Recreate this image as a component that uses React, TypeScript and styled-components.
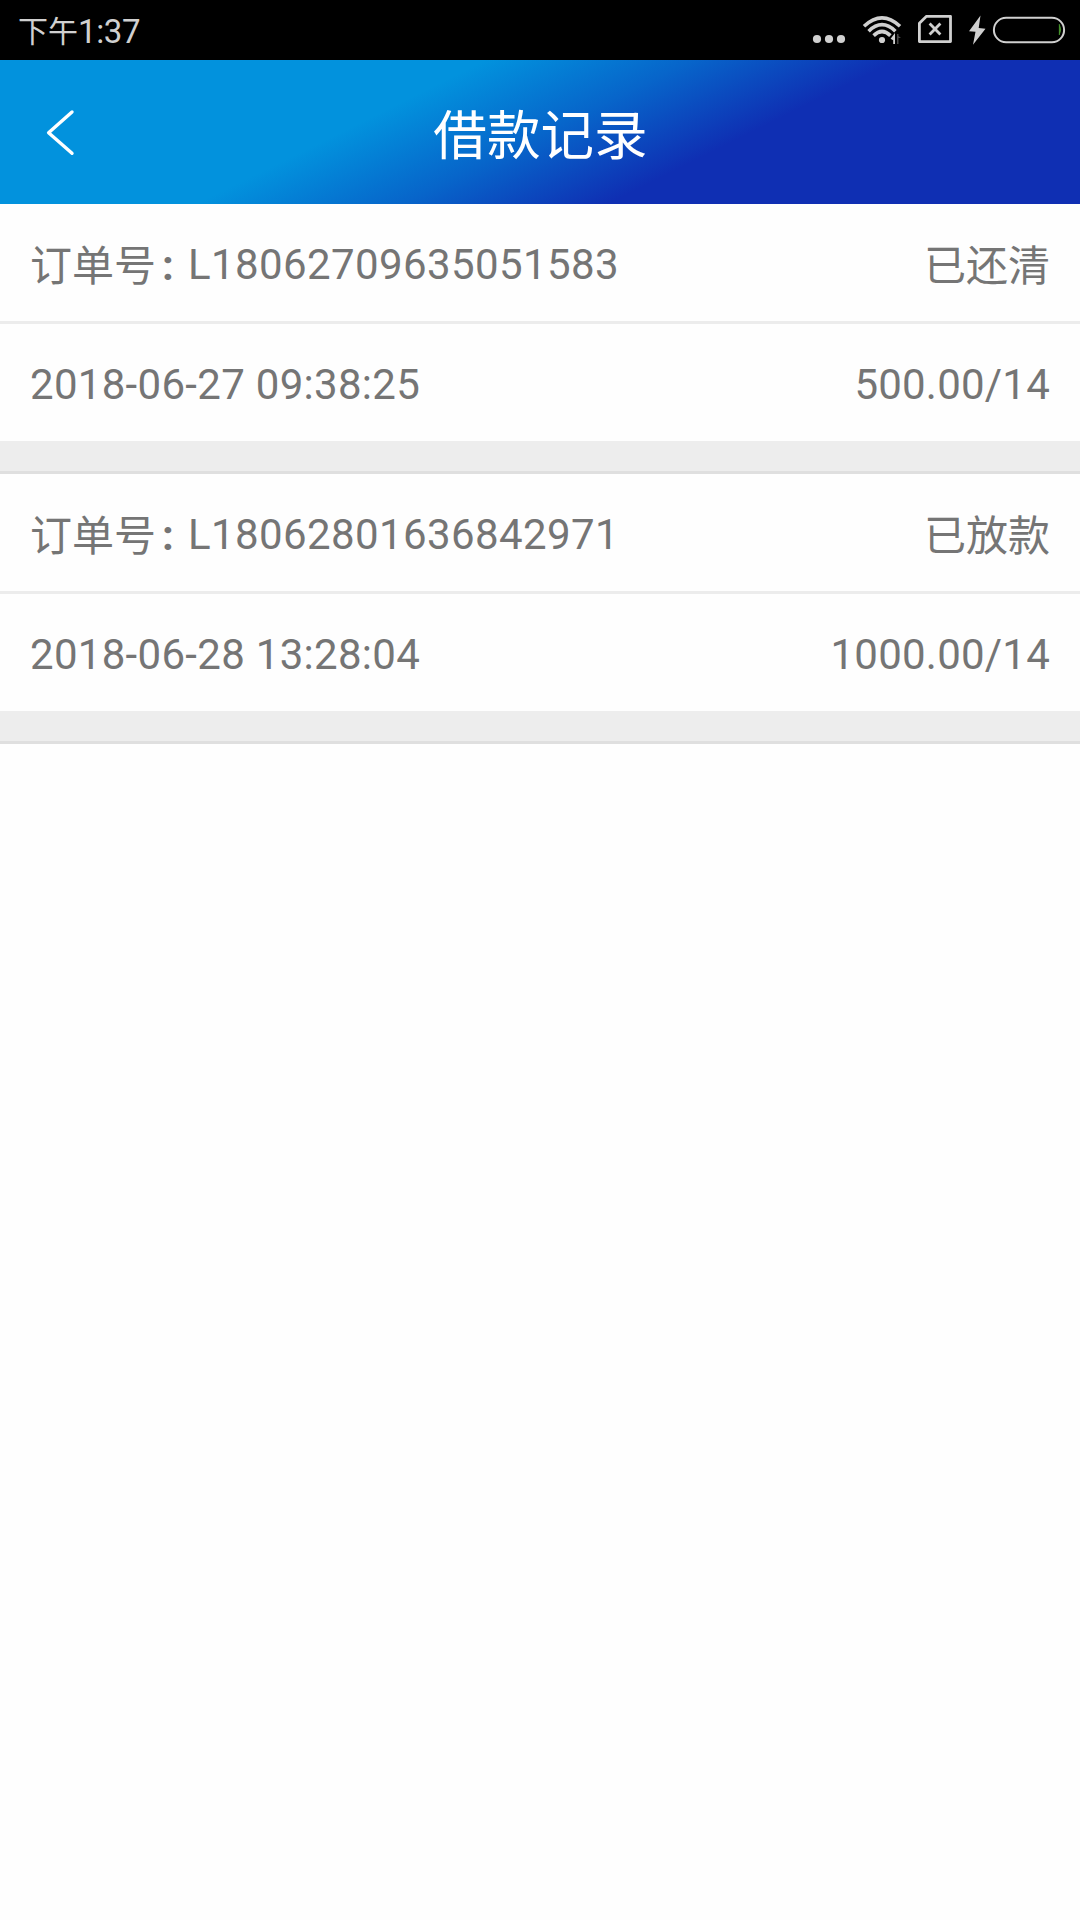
import React from "react";
import styled, { createGlobalStyle } from "styled-components";

const GlobalStyle = createGlobalStyle`
  body {
    margin: 0;
    background: #fff;
    font-family: Roboto, "Noto Sans CJK SC", sans-serif;
  }
`;

const Screen = styled.main`
  display: flex;
  flex-direction: column;
  width: 1080px;
  min-height: 1920px;
  background: #fefefe;
`;

const StatusBar = styled.div`
  display: flex;
  align-items: center;
  justify-content: space-between;
  height: 60px;
  padding: 0 14px 0 18px;
  background: #000;
  color: #d0d0d0;
`;

const Clock = styled.span`
  display: flex;
  align-items: center;
  font-size: 30px;
  line-height: 60px;
  padding-top: 3px;
`;

const ClockDigits = styled.span`
  font-size: 33px;
  letter-spacing: -0.4px;
`;

const StatusIcons = styled.div`
  display: flex;
  height: 60px;
`;

const Glyph = styled.svg<{ $gap?: number }>`
  display: block;
  height: 60px;
  margin-left: ${({ $gap = 0 }) => $gap}px;
`;

const Header = styled.header`
  display: grid;
  grid-template-columns: 120px 1fr 120px;
  align-items: center;
  height: 144px;
  background: linear-gradient(153.6deg, #0292dd 35.5%, #0765ca 50.5%, #0f2fb3 65.5%);
`;

const BackButton = styled.button`
  display: flex;
  align-items: center;
  height: 144px;
  padding: 0 0 0 44px;
  border: 0;
  background: none;
`;

const Title = styled.h1`
  margin: 0;
  padding: 10px 0 0 1px;
  color: #fff;
  font-size: 53.6px;
  font-weight: 400;
  line-height: 80px;
  text-align: center;
`;

const Record = styled.section`
  display: flex;
  flex-direction: column;
  border-bottom: 3px solid #dfdfdf;
`;

const Row = styled.div<{ $divided?: boolean }>`
  display: flex;
  align-items: center;
  justify-content: space-between;
  height: 117px;
  padding: 4px 30px 0;
  box-sizing: border-box;
  color: #757575;
  font-size: 42px;
  line-height: 60px;

  ${({ $divided }) => $divided && "height: 120px; border-bottom: 3px solid #ececec;"}
`;

const Label = styled.span`
  display: flex;
  align-items: center;
`;

const Chinese = styled.span`
  padding-top: 4px;
`;

const Colon = styled.span`
  width: 32px;
  padding-top: 2px;
  text-indent: 6px;
  font-weight: 700;
`;

const Latin = styled.span<{ $tracking: number }>`
  letter-spacing: ${({ $tracking }) => $tracking}px;
`;

const Spacer = styled.div`
  height: 30px;
  background: #ededed;
`;

const records = [
  { id: "L18062709635051583", status: "已还清", time: "2018-06-27 09:38:25", amount: "500.00/14" },
  { id: "L18062801636842971", status: "已放款", time: "2018-06-28 13:28:04", amount: "1000.00/14" },
];

function StatusGlyphs() {
  return (
    <StatusIcons>
      <Glyph width="34" viewBox="812 0 34 60" fill="#d0d0d0">
        <circle cx="817" cy="39" r="4.1" />
        <circle cx="829" cy="39" r="4.1" />
        <circle cx="841" cy="39" r="4.1" />
      </Glyph>
      <Glyph $gap={16} width="40" viewBox="862 0 40 60" fill="none" stroke="#d0d0d0" strokeWidth="3.6">
        <path d="M864 26.2Q882 9.4 900 26.2" />
        <path d="M868.6 31.2Q882 18.2 895.4 31.2" />
        <path d="M873.6 35.6Q882 27.4 890.4 35.6" />
        <circle cx="882" cy="40" r="3.1" fill="#d0d0d0" stroke="none" />
        <path d="M895 33v11h-1.8v-3.7l-2.6-1.5z" fill="#d0d0d0" stroke="none" />
        <path d="M897 34h1.5v2l2.5 2h-2.5v6H897z" fill="#484848" stroke="none" />
      </Glyph>
      <Glyph $gap={15} width="36" viewBox="917 0 36 60" fill="none" stroke="#d0d0d0" strokeWidth="2.8">
        <path d="M926.5 16.3H950.5V41.6H919.4V23.2Z" strokeLinejoin="round" />
        <path d="M929.6 23.4l10.8 11M940.4 23.4l-10.8 11" />
      </Glyph>
      <Glyph $gap={15} width="19" viewBox="968 0 19 60" fill="#d0d0d0">
        <path d="M980.5 15.5L969 31.2l6.5.6-2.5 13L985.5 28.7l-6.8-.6z" />
      </Glyph>
      <Glyph $gap={5} width="74" viewBox="992 0 74 60" fill="none">
        <rect x="993.9" y="17.8" width="70.2" height="24.4" rx="12.2" stroke="#d0d0d0" strokeWidth="2" />
        <path d="M1059.3 24.2Q1062 29.5 1059.3 35z" fill="#51a832" stroke="#51a832" strokeWidth=".6" />
      </Glyph>
    </StatusIcons>
  );
}

export default function App() {
  return (
    <Screen>
      <GlobalStyle />
      <StatusBar>
        <Clock>
          <span>下午</span>
          <ClockDigits>1:37</ClockDigits>
        </Clock>
        <StatusGlyphs />
      </StatusBar>
      <Header>
        <BackButton aria-label="返回">
          <svg width="32" height="48" viewBox="0 0 32 48" fill="none" stroke="#fff" strokeWidth="3.4" strokeLinecap="round" strokeLinejoin="round">
            <path d="M28 4L4.6 24.7L28 45.3" />
          </svg>
        </BackButton>
        <Title>借款记录</Title>
      </Header>
      {records.map((record) => (
        <Record key={record.id}>
          <Row $divided>
            <Label>
              <Chinese>订单号</Chinese>
              <Colon>:</Colon>
              <Latin $tracking={0.4}>{record.id}</Latin>
            </Label>
            <Chinese>{record.status}</Chinese>
          </Row>
          <Row>
            <Latin $tracking={0.3}>{record.time}</Latin>
            <Latin $tracking={0.22}>{record.amount}</Latin>
          </Row>
          <Spacer />
        </Record>
      ))}
    </Screen>
  );
}
